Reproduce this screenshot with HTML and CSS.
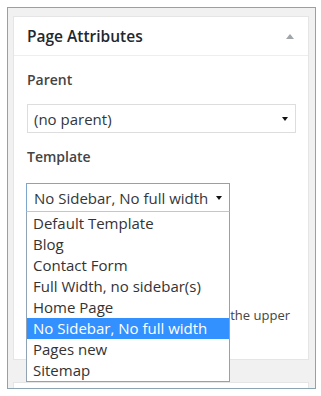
FILE: index.html
```html
<!DOCTYPE html>
<html>
<head>
<meta charset="utf-8">
<link rel="stylesheet" href="styles.css">
</head>
<body>
<div class="frame">
  <div class="postbox">
    <div class="hndle">
      <h2 class="title">Page Attributes</h2>
      <svg class="toggle" width="8" height="5" viewBox="0 0 8 5"><path d="M0 5 L4 0 L8 5 Z" fill="#a0a5aa"/></svg>
    </div>
    <div class="inside">
      <p class="label label-parent">Parent</p>
      <div class="select select-parent">
        <span class="value">(no parent)</span>
        <svg class="arrow" width="6" height="4" viewBox="0 0 6 4"><path d="M0 0 L6 0 L3 4 Z" fill="#111"/></svg>
      </div>
      <p class="label label-template">Template</p>
      <div class="select-wrap">
        <div class="select select-template">
          <span class="value">No Sidebar, No full width</span>
          <svg class="arrow" width="6" height="4" viewBox="0 0 6 4"><path d="M0 0 L6 0 L3 4 Z" fill="#111"/></svg>
        </div>
        <ul class="options">
          <li>Default Template</li>
          <li>Blog</li>
          <li>Contact Form</li>
          <li>Full Width, no sidebar(s)</li>
          <li>Home Page</li>
          <li class="selected">No Sidebar, No full width</li>
          <li>Pages new</li>
          <li>Sitemap</li>
        </ul>
      </div>
      <p class="help">the upper</p>
    </div>
  </div>
  <div class="postbox postbox-next"></div>
</div>
</body>
</html>
```
FILE: styles.css
```css
html, body {
  margin: 0;
  padding: 0;
  background: #ffffff;
}
body {
  font-family: "Open Sans", "Noto Sans", sans-serif;
  color: #32373c;
  padding: 7px 0 0 7px;
}
.frame {
  border: 1px solid #8aa4b2;
  background: #f1f1f1;
  padding: 8px 6px 0 5px;
  box-sizing: border-box;
  width: 309px;
  height: 382px;
  overflow: hidden;
}
.postbox {
  background: #ffffff;
  border: 1px solid #e5e5e5;
  height: 344px;
  box-sizing: border-box;
}
.postbox-next {
  margin-top: 22px;
  height: 40px;
}
.hndle {
  height: 39px;
  border-bottom: 1px solid #eeeeee;
  box-sizing: border-box;
  display: flex;
  align-items: center;
  justify-content: space-between;
  padding: 0 14px 0 13px;
}
.title {
  margin: 0;
  font-size: 15.5px;
  font-weight: 600;
  color: #23282d;
  line-height: 20px;
}
.toggle {
  display: block;
}
.inside {
  padding: 0 12px 0 13px;
}
.label {
  margin: 0;
  font-size: 14px;
  font-weight: 600;
  color: #444444;
  line-height: 20px;
}
.label-parent {
  margin-top: 14px;
}
.select {
  height: 29px;
  box-sizing: border-box;
  border: 1px solid #dddddd;
  background: #ffffff;
  display: flex;
  align-items: center;
  justify-content: space-between;
  padding: 0 7px 0 6px;
  font-size: 15px;
  color: #32373c;
}
.select-parent {
  margin-top: 14px;
  width: 269px;
}
.label-template {
  margin-top: 14px;
}
.select-wrap {
  position: relative;
  margin-top: 16px;
  margin-left: -1px;
  width: 204px;
}
.select-template {
  border-color: #7ea6cc;
  padding-left: 7px;
}
.options {
  position: absolute;
  left: 0;
  top: 28px;
  width: 204px;
  box-sizing: border-box;
  margin: 0;
  padding: 1px 0 0 0;
  list-style: none;
  background: #ffffff;
  border: 1px solid #8fa3b5;
  border-top-color: #b9c9d6;
  z-index: 2;
}
.options li {
  height: 21px;
  line-height: 21px;
  font-size: 15px;
  color: #333333;
  padding-left: 6px;
  white-space: nowrap;
}
.options li.selected {
  background: #3390ff;
  color: #ffffff;
}
.help {
  margin: 93px 0 0 0;
  font-size: 13px;
  line-height: 20px;
  color: #444444;
  white-space: nowrap;
  text-align: right;
  padding-right: 6px;
}
```
